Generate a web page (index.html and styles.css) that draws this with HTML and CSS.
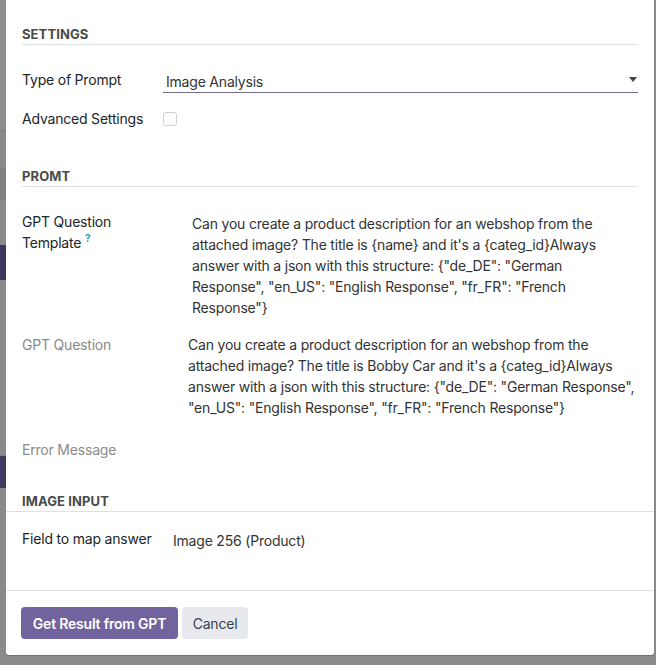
FILE: index.html
```html
<!DOCTYPE html>
<html>
<head>
<meta charset="utf-8">
<link rel="stylesheet" href="styles.css">
</head>
<body>
<div class="screen">
  <div class="backdrop-strip">
    <div class="band b1"></div>
    <div class="band b2"></div>
    <div class="band b3"></div>
    <div class="band b4"></div>
    <div class="band b5"></div>
    <div class="band b6"></div>
    <div class="band b7"></div>
    <div class="band b8"></div>
  </div>
  <div class="modal">
    <div class="modal-body">
      <div class="section-title first">Settings</div>
      <div class="row row-type">
        <div class="label w-settings">Type of Prompt</div>
        <div class="select">
          <span>Image Analysis</span>
          <span class="caret"></span>
        </div>
      </div>
      <div class="row row-adv">
        <div class="label w-settings">Advanced Settings</div>
        <div class="checkbox"></div>
      </div>

      <div class="section-title promt">Promt</div>
      <div class="row row-template">
        <div class="label w-template">GPT Question<br>Template <sup class="help">?</sup></div>
        <div class="value value-template">Can you create a product description for an webshop from the attached image? The title is {name} and it's a {categ_id}Always answer with a json with this structure: {"de_DE": "German Response", "en_US": "English Response", "fr_FR": "French Response"}</div>
      </div>
      <div class="row row-question">
        <div class="label muted w-question">GPT Question</div>
        <div class="value">Can you create a product description for an webshop from the attached image? The title is Bobby Car and it's a {categ_id}Always answer with a json with this structure: {"de_DE": "German Response", "en_US": "English Response", "fr_FR": "French Response"}</div>
      </div>
      <div class="row row-error">
        <div class="label muted">Error Message</div>
      </div>

      <div class="section-title wide">Image Input</div>
      <div class="row row-field">
        <div class="label w-field">Field to map answer</div>
        <div class="value value-field">Image 256 (Product)</div>
      </div>
    </div>
    <div class="modal-footer">
      <button class="btn btn-primary">Get Result from GPT</button>
      <button class="btn btn-secondary">Cancel</button>
    </div>
  </div>
</div>
</body>
</html>
```

FILE: styles.css
```css
* { box-sizing: border-box; }
html, body {
  margin: 0;
  padding: 0;
  background: #8a8a8a;
}
body {
  font-family: Inter, "Liberation Sans", sans-serif;
  font-size: 14px;
  letter-spacing: -0.2px;
  color: #222;
  width: 656px;
  height: 665px;
  overflow: hidden;
}
.screen {
  display: flex;
  height: 665px;
}
.backdrop-strip {
  width: 6px;
  flex: none;
  display: flex;
  flex-direction: column;
}
.band { width: 6px; }
.b1 { height: 131px; background: #8e8e8e; border-bottom: 1px solid #7d7d7d; }
.b2 { height: 37px; background: #8a8a8a; }
.b3 { height: 32px; background: #7f807f; }
.b4 { height: 45px; background: #8a8a8a; }
.b5 { height: 35px; background: #3d3760; }
.b6 { height: 176px; background: #8a8a8a; border-bottom: 1px solid #7c7c7c; }
.b7 { height: 32px; background: #3e3862; }
.b8 { flex: 1; background: #8a8a8a; }

.modal {
  width: 648px;
  height: 655px;
  background: #fff;
  display: flex;
  flex-direction: column;
  border-radius: 0 0 3px 3px;
  box-shadow: 0 1px 0 #6f6f6f;
}
.modal-body {
  padding: 0 16px;
  flex: 1;
}
.section-title {
  font-size: 13px;
  font-weight: 700;
  line-height: 20px;
  text-transform: uppercase;
  color: #4a4a4a;
  border-bottom: 1px solid #dee2e6;
  letter-spacing: 0.1px;
}
.section-title.first { margin-top: 24px; }
.section-title.promt { margin-top: 37px; }
.section-title.wide {
  margin: 31px -16px 0;
  padding-left: 16px;
}
.row {
  display: flex;
  align-items: flex-start;
  line-height: 21px;
}
.label {
  flex: none;
  color: #212529;
}
.label.muted { color: #8a8a8a; }
.w-settings { width: 141px; }
.w-template { width: 170px; }
.w-question { width: 166px; }
.w-field { width: 151px; }
.value { flex: 1; color: #333; }
.row-type { margin-top: 24px; }
.select {
  flex: 1;
  display: flex;
  justify-content: space-between;
  align-items: center;
  padding: 2px 0 0 3px;
  border-bottom: 1px solid #776f8c;
  color: #333;
}
.caret {
  width: 0;
  height: 0;
  border-left: 4px solid transparent;
  border-right: 4px solid transparent;
  border-top: 5px solid #444;
  margin-right: 1px;
  margin-top: -4px;
}
.row-adv { margin-top: 15px; align-items: center; }
.checkbox {
  width: 14px;
  height: 14px;
  border: 1px solid #d0d0d0;
  border-radius: 3px;
  background: #fff;
}
.row-template { margin-top: 24px; }
.value-template { padding-top: 2px; }
.help {
  color: #17a2b8;
  font-size: 10px;
  font-weight: 700;
  vertical-align: 6px;
  line-height: 0;
}
.row-question { margin-top: 16px; }
.row-error { margin-top: 21px; }
.row-field { margin-top: 16px; }
.value-field { padding-top: 2px; }

.modal-footer {
  border-top: 1px solid #dee2e6;
  height: 65px;
  padding: 16px 15px 0;
  display: flex;
  gap: 4px;
  align-items: flex-start;
}
.btn {
  font-family: inherit;
  font-size: 14px;
  letter-spacing: -0.2px;
  height: 32px;
  border: none;
  border-radius: 4px;
  padding: 0;
  white-space: nowrap;
  cursor: pointer;
}
.btn-primary {
  background: #71639e;
  color: #fff;
  font-weight: 600;
  width: 157px;
}
.btn-secondary {
  background: #e7e9ed;
  color: #374151;
  width: 66px;
}
```
